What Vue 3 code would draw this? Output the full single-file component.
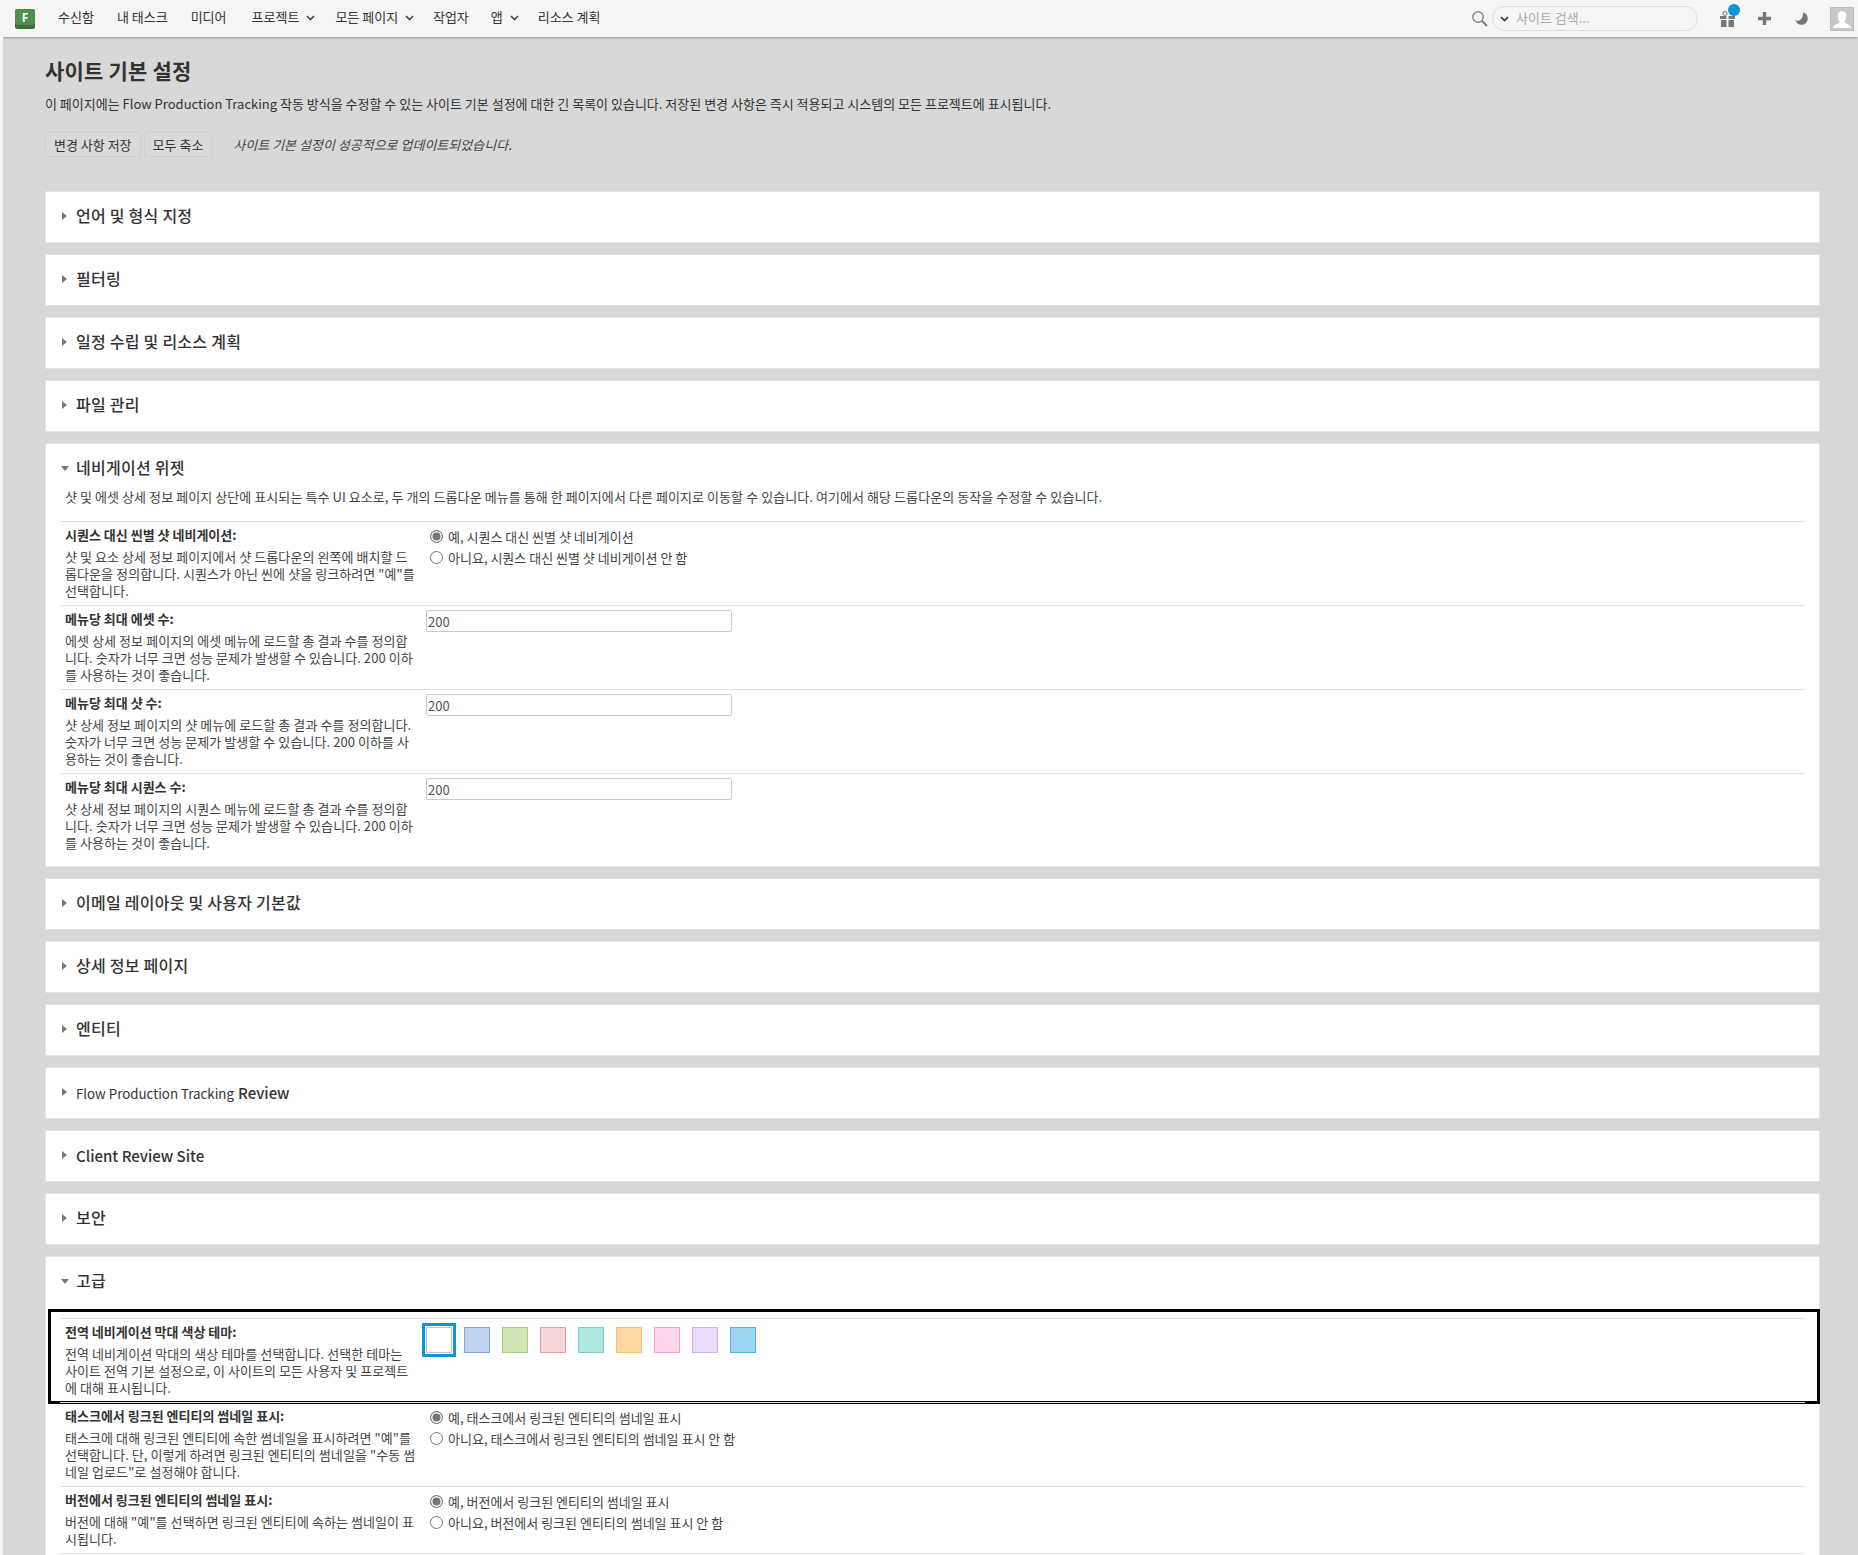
<template>
  <div class="page">
    <header class="nav">
      <svg class="logo" width="20" height="20" viewBox="0 0 20 20">
        <rect x="0" y="0" width="20" height="20" rx="2.5" fill="#3b7139" />
        <rect x="0" y="0" width="20" height="16" rx="2.5" fill="#4e8f4c" />
        <text x="10" y="12.5" text-anchor="middle" class="logo-f">F</text>
      </svg>
      <div class="nav-links">
        <span v-for="item in navItems" :key="item.label" class="nav-item" :class="{ menu: item.menu }">
          {{ item.label }}
          <svg v-if="item.menu" class="nav-chev" width="9" height="6" viewBox="0 0 9 6">
            <path d="M1 1l3.5 3.5L8 1" fill="none" stroke="#444" stroke-width="1.6" />
          </svg>
        </span>
      </div>
      <div class="nav-right">
        <svg width="17" height="17" viewBox="0 0 17 17" class="search-icon">
          <circle cx="7" cy="7" r="5.2" fill="none" stroke="#888" stroke-width="1.5" />
          <path d="M11 11l5 5" stroke="#777" stroke-width="2" />
        </svg>
        <div class="search">
          <svg width="9" height="6" viewBox="0 0 9 6">
            <path d="M1 1l3.5 3.500L8 1" fill="none" stroke="#333" stroke-width="1.6" />
          </svg>
          <span>사이트 검색...</span>
        </div>
        <div class="gift">
          <svg width="15" height="16" viewBox="0 0 15 16">
            <path d="M0 5h6.500v3H0zM8.500 5H15v3H8.500zM1 9h5.500v7H1zM8.500 9H14v7H8.500z" fill="#777" />
            <circle cx="5" cy="2.500" r="2" fill="none" stroke="#888" stroke-width="1.2" />
          </svg>
          <i class="badge"></i>
        </div>
        <svg class="plus" width="13" height="13" viewBox="0 0 13 13">
          <path d="M0 6.500h13M6.500 0v13" stroke="#777" stroke-width="3.4" />
        </svg>
        <svg class="moon" width="13" height="13" viewBox="0 0 13 13">
          <path d="M8 0.500A6.200 6.200 0 1 1 0.500 8C3 10 8.500 8 8 0.500z" fill="#777" />
        </svg>
        <div class="avatar">
          <svg width="22" height="22" viewBox="0 0 22 22">
            <path d="M11 3c3 0 4.400 2.200 4.400 5S13.600 13 13.400 14.200c.3 1.600 6.600 2 6.600 5.800H2c0-3.800 6.300-4.200 6.600-5.800C8.400 13 6.600 10.800 6.600 8S8 3 11 3z" fill="#fff" />
          </svg>
        </div>
      </div>
    </header>

    <main class="content">
      <h1>사이트 기본 설정</h1>
      <p class="lead">이 페이지에는 Flow Production Tracking 작동 방식을 수정할 수 있는 사이트 기본 설정에 대한 긴 목록이 있습니다. 저장된 변경 사항은 즉시 적용되고 시스템의 모든 프로젝트에 표시됩니다.</p>
      <div class="actions">
        <button>변경 사항 저장</button>
        <button>모두 축소</button>
        <em>사이트 기본 설정이 성공적으로 업데이트되었습니다.</em>
      </div>

      <section v-for="sec in sections" :key="sec.title" class="section" :class="{ open: sec.rows }">
        <div class="sec-head">
          <span class="caret-slot"><i :class="sec.rows ? 'caret-down' : 'caret-right'"></i></span>
          <h2 :class="{ latin: sec.latin }"><span v-if="sec.prefix" class="prefix">{{ sec.prefix }}</span>{{ sec.title }}</h2>
        </div>
        <p v-if="sec.intro" class="intro">{{ sec.intro }}</p>
        <div v-for="row in sec.rows" :key="row.label" class="row">
          <div class="row-text">
            <div class="row-label">{{ row.label }}</div>
            <div class="row-desc">{{ row.desc }}</div>
          </div>
          <div class="row-control">
            <input v-if="row.value" class="num" type="text" :value="row.value" />
            <div v-else-if="row.swatches" class="swatches">
              <span
                v-for="(s, i) in row.swatches"
                :key="s[0]"
                class="swatch"
                :class="{ picked: i === 0 }"
                :style="{ background: s[0], borderColor: s[1] }"
              ></span>
            </div>
            <template v-else>
              <label v-for="(opt, i) in row.options" :key="opt" class="radio">
                <span class="dot" :class="{ on: i === 0 }"></span>{{ opt }}
              </label>
            </template>
          </div>
          <div v-if="row.swatches" class="callout"></div>
        </div>
      </section>
    </main>
  </div>
</template>

<script setup>
const navItems = [
  { label: '수신함' },
  { label: '내 태스크' },
  { label: '미디어' },
  { label: '프로젝트', menu: true },
  { label: '모든 페이지', menu: true },
  { label: '작업자' },
  { label: '앱', menu: true },
  { label: '리소스 계획' }
]

const sections = [
  { title: '언어 및 형식 지정' },
  { title: '필터링' },
  { title: '일정 수립 및 리소스 계획' },
  { title: '파일 관리' },
  {
    title: '네비게이션 위젯',
    intro: '샷 및 에셋 상세 정보 페이지 상단에 표시되는 특수 UI 요소로, 두 개의 드롭다운 메뉴를 통해 한 페이지에서 다른 페이지로 이동할 수 있습니다. 여기에서 해당 드롭다운의 동작을 수정할 수 있습니다.',
    rows: [
      {
        label: '시퀀스 대신 씬별 샷 네비게이션:',
        desc: '샷 및 요소 상세 정보 페이지에서 샷 드롭다운의 왼쪽에 배치할 드롭다운을 정의합니다. 시퀀스가 아닌 씬에 샷을 링크하려면 "예"를 선택합니다.',
        options: ['예, 시퀀스 대신 씬별 샷 네비게이션', '아니요, 시퀀스 대신 씬별 샷 네비게이션 안 함']
      },
      {
        label: '메뉴당 최대 에셋 수:',
        desc: '에셋 상세 정보 페이지의 에셋 메뉴에 로드할 총 결과 수를 정의합니다. 숫자가 너무 크면 성능 문제가 발생할 수 있습니다. 200 이하를 사용하는 것이 좋습니다.',
        value: '200'
      },
      {
        label: '메뉴당 최대 샷 수:',
        desc: '샷 상세 정보 페이지의 샷 메뉴에 로드할 총 결과 수를 정의합니다. 숫자가 너무 크면 성능 문제가 발생할 수 있습니다. 200 이하를 사용하는 것이 좋습니다.',
        value: '200'
      },
      {
        label: '메뉴당 최대 시퀀스 수:',
        desc: '샷 상세 정보 페이지의 시퀀스 메뉴에 로드할 총 결과 수를 정의합니다. 숫자가 너무 크면 성능 문제가 발생할 수 있습니다. 200 이하를 사용하는 것이 좋습니다.',
        value: '200'
      }
    ]
  },
  { title: '이메일 레이아웃 및 사용자 기본값' },
  { title: '상세 정보 페이지' },
  { title: '엔티티' },
  { title: 'Review', prefix: 'Flow Production Tracking', latin: true },
  { title: 'Client Review Site', latin: true },
  { title: '보안' },
  {
    title: '고급',
    rows: [
      {
        label: '전역 네비게이션 막대 색상 테마:',
        desc: '전역 네비게이션 막대의 색상 테마를 선택합니다. 선택한 테마는 사이트 전역 기본 설정으로, 이 사이트의 모든 사용자 및 프로젝트에 대해 표시됩니다.',
        swatches: [
          ['#ffffff', '#c4c4c4'],
          ['#bdd2ef', '#7fa5d9'],
          ['#d1e5b4', '#a9cf7d'],
          ['#f6d7d7', '#ee9a9a'],
          ['#afe6df', '#72d0c4'],
          ['#fdd8a3', '#fbc062'],
          ['#ffd5ee', '#fb9ed5'],
          ['#e9dbfc', '#cdb2f2'],
          ['#9cd5f2', '#52b5e6']
        ]
      },
      {
        label: '태스크에서 링크된 엔티티의 썸네일 표시:',
        desc: '태스크에 대해 링크된 엔티티에 속한 썸네일을 표시하려면 "예"를 선택합니다. 단, 이렇게 하려면 링크된 엔티티의 썸네일을 "수동 썸네일 업로드"로 설정해야 합니다.',
        options: ['예, 태스크에서 링크된 엔티티의 썸네일 표시', '아니요, 태스크에서 링크된 엔티티의 썸네일 표시 안 함']
      },
      {
        label: '버전에서 링크된 엔티티의 썸네일 표시:',
        desc: '버전에 대해 "예"를 선택하면 링크된 엔티티에 속하는 썸네일이 표시됩니다.',
        options: ['예, 버전에서 링크된 엔티티의 썸네일 표시', '아니요, 버전에서 링크된 엔티티의 썸네일 표시 안 함']
      }
    ]
  }
]
</script>

<style>
html, body {
  margin: 0;
  background: #d8d8d8;
}
</style>

<style scoped>
.page {
  height: 1555px;
  overflow: hidden;
  background: #d8d8d8;
  border-left: 3px solid #f5f5f5;
  font-family: "Noto Sans CJK KR", sans-serif;
  color: #333;
  font-size: 13px;
  box-sizing: border-box;
}
.nav {
  height: 37px;
  background: #f5f5f5;
  box-shadow: 0 1px 2px rgba(0, 0, 0, 0.3);
  display: flex;
  align-items: center;
  padding-left: 12px;
  padding-right: 4px;
  position: relative;
}
.logo-f {
  font-family: "Open Sans", sans-serif;
  font-size: 12px;
  font-weight: 700;
  fill: #fff;
}
.nav-links {
  display: flex;
  margin-left: 23px;
  gap: 23px;
  margin-top: -4px;
}
.nav-item {
  display: flex;
  align-items: center;
  gap: 7px;
  font-size: 13px;
  color: #333;
}
.nav-item.menu {
  margin-right: -4px;
}
.nav-item:nth-child(4) {
  margin-left: 2px;
}
.nav-item:nth-child(5) {
  margin-left: 1px;
}
.nav-item:nth-child(6) {
  margin-right: -1px;
  letter-spacing: -0.1px;
}
.nav-chev {
  margin-top: 3px;
}
.nav-right {
  margin-left: auto;
  display: flex;
  align-items: center;
}
.search-icon {
  margin-right: 4px;
}
.search {
  width: 206px;
  height: 25px;
  box-sizing: border-box;
  border: 1px solid #dcdcdc;
  border-radius: 13px;
  display: flex;
  align-items: center;
  gap: 7px;
  padding-left: 7px;
  padding-bottom: 2px;
  color: #aaa;
  font-size: 13px;
}
.search svg {
  margin-top: 2px;
}
.gift {
  position: relative;
  height: 16px;
  margin-left: 22px;
}
.gift svg {
  display: block;
}
.badge {
  position: absolute;
  left: 8px;
  top: -7px;
  width: 12px;
  height: 12px;
  border-radius: 50%;
  background: #0a96d9;
}
.plus {
  margin-left: 23px;
}
.moon {
  margin-left: 24px;
}
.avatar {
  width: 24px;
  height: 24px;
  margin-left: 22px;
  background: #c8c8c8;
  border: 1px solid #bbb;
  box-sizing: border-box;
  display: flex;
  align-items: flex-end;
  justify-content: center;
  overflow: hidden;
}
.content {
  padding: 20px 38px 0 42px;
}
h1 {
  margin: 0;
  font-size: 21px;
  line-height: 26px;
  font-weight: 700;
  letter-spacing: 0.2px;
  color: #333;
}
.lead {
  margin: 11px 0 0;
  line-height: 20px;
}
.actions {
  display: flex;
  align-items: center;
  gap: 3px;
  margin-top: 18px;
  margin-bottom: 34px;
}
.actions button {
  height: 25px;
  padding: 0 8px;
  font: inherit;
  color: #333;
  background: #dadada;
  border: 1px solid #cfcfcf;
  border-radius: 3px;
}
.actions em {
  margin-left: 18px;
  color: #444;
  font-size: 13px;
}
.section {
  background: #fff;
  border: 1px solid #e4e4e4;
  margin-bottom: 11px;
  padding: 0 14px;
}
.section.open {
  padding-bottom: 9px;
}
.sec-head {
  height: 50px;
  padding-bottom: 4px;
  box-sizing: border-box;
  display: flex;
  align-items: center;
}
.sec-head + .row {
  margin-top: 11px;
}
.caret-slot {
  width: 16px;
  display: flex;
  align-items: center;
  padding-left: 1px;
  padding-top: 2px;
  box-sizing: border-box;
}
.caret-right {
  width: 0;
  height: 0;
  border-left: 5px solid #777;
  border-top: 4.5px solid transparent;
  border-bottom: 4.5px solid transparent;
  margin-left: 1px;
}
.caret-down {
  width: 0;
  height: 0;
  border-top: 5px solid #777;
  border-left: 4px solid transparent;
  border-right: 4px solid transparent;
}
h2 {
  margin: 0;
  font-size: 16px;
  font-weight: 500;
  letter-spacing: 0.25px;
  color: #333;
}
h2.latin {
  font-size: 15px;
  letter-spacing: 0;
  margin-top: 2px;
}
.prefix {
  font-size: 13.3px;
  font-weight: 400;
  margin-right: 4px;
}
.intro {
  margin: -7px 0 0;
  padding: 0 5px 14px;
  line-height: 20px;
  letter-spacing: 0.07px;
  color: #444;
}
.row {
  position: relative;
  border-top: 1px solid #e2e2e2;
  display: grid;
  grid-template-columns: 352px 1fr;
  column-gap: 9px;
  padding: 4px 5px 6px;
}
.section:last-child .row:last-child {
  border-bottom: 1px solid #e2e2e2;
}
.row-label {
  font-weight: 700;
  font-size: 13px;
  line-height: 17px;
  margin-bottom: 5px;
}
.row-desc {
  line-height: 17px;
  word-break: break-all;
  letter-spacing: 0.07px;
  color: #444;
}
.row-control {
  display: flex;
  flex-direction: column;
  align-items: flex-start;
}
.num {
  width: 306px;
  height: 22px;
  box-sizing: border-box;
  border: 1px solid #ccc;
  padding: 0 1px;
  font: inherit;
  color: #555;
  margin-top: 0;
  border-radius: 2px;
}
.radio {
  display: flex;
  align-items: center;
  gap: 5px;
  height: 21px;
  padding-left: 4px;
  line-height: 21px;
  color: #444;
}
.dot {
  width: 13px;
  height: 13px;
  box-sizing: border-box;
  border: 1px solid #777;
  border-radius: 50%;
  background: #fff;
}
.dot.on {
  box-shadow: inset 0 0 0 1.5px #fff;
  background: #777;
}
.swatches {
  display: flex;
  gap: 12px;
  padding-top: 4px;
}
.swatch {
  width: 26px;
  height: 26px;
  box-sizing: border-box;
  border: 1px solid;
  position: relative;
}
.swatch.picked {
  outline: 3px solid #0a96d9;
  outline-offset: 1px;
}
.callout {
  position: absolute;
  left: -12px;
  right: -15px;
  top: -10px;
  bottom: -2px;
  border: 3px solid #000;
  pointer-events: none;
}
</style>
